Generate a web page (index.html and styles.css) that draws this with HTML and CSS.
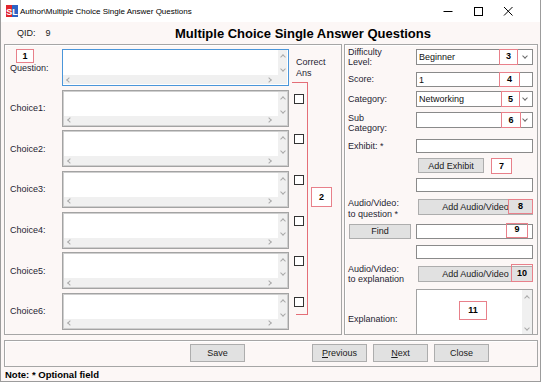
FILE: index.html
```html
<!DOCTYPE html>
<html>
<head>
<meta charset="utf-8">
<title>Multiple Choice Single Answer Questions</title>
<link rel="stylesheet" href="styles.css">
</head>
<body>
<div class="window">
  <div class="titlebar">
    <svg class="appicon" width="12" height="12" viewBox="0 0 12 12">
      <rect x="0" y="0" width="6" height="12" fill="#e1262d"/>
      <rect x="6" y="0" width="6" height="12" fill="#2c63c4"/>
      <text x="3.2" y="9.5" font-size="9" font-family="Liberation Sans" font-weight="bold" fill="#fff" text-anchor="middle">S</text>
      <text x="9" y="9.5" font-size="9" font-family="Liberation Sans" font-weight="bold" fill="#fff" text-anchor="middle">L</text>
    </svg>
    <span class="wtitle">Author\Multiple Choice Single Answer Questions</span>
    <div class="wctrls">
      <span class="wc"><svg width="10" height="10" viewBox="0 0 10 10"><line x1="0.5" y1="5.5" x2="9.5" y2="5.5" stroke="#000" stroke-width="1"/></svg></span>
      <span class="wc"><svg width="10" height="10" viewBox="0 0 10 10"><rect x="1.5" y="1.5" width="8" height="8" fill="none" stroke="#000" stroke-width="1"/></svg></span>
      <span class="wc"><svg width="10" height="10" viewBox="0 0 10 10"><path d="M1 1 L9.5 9.5 M9.5 1 L1 9.5" stroke="#000" stroke-width="1"/></svg></span>
    </div>
  </div>

  <div class="header">
    <div class="qidbox"><span>QID:</span><span class="qidv">9</span></div>
    <div class="heading">Multiple Choice Single Answer Questions</div>
  </div>

  <div class="main">
    <div class="lgroup">
      <div class="llbl">Question:</div>
      <div class="ta focus"><div class="tab"></div><div class="vs"><i class="cv up"></i><i class="cv dn"></i></div><div class="hs"><i class="cv lf"></i><i class="cv rt"></i></div><div class="corner"></div></div>
      <div class="chkcell"><div class="corr">Correct<br>Ans</div></div>

      <div class="llbl">Choice1:</div>
      <div class="ta"><div class="tab"></div><div class="vs"><i class="cv up"></i><i class="cv dn"></i></div><div class="hs"><i class="cv lf"></i><i class="cv rt"></i></div><div class="corner"></div></div>
      <div class="chkcell"><span class="chk"></span></div>

      <div class="llbl">Choice2:</div>
      <div class="ta"><div class="tab"></div><div class="vs"><i class="cv up"></i><i class="cv dn"></i></div><div class="hs"><i class="cv lf"></i><i class="cv rt"></i></div><div class="corner"></div></div>
      <div class="chkcell"><span class="chk"></span></div>

      <div class="llbl">Choice3:</div>
      <div class="ta"><div class="tab"></div><div class="vs"><i class="cv up"></i><i class="cv dn"></i></div><div class="hs"><i class="cv lf"></i><i class="cv rt"></i></div><div class="corner"></div></div>
      <div class="chkcell"><span class="chk"></span></div>

      <div class="llbl">Choice4:</div>
      <div class="ta"><div class="tab"></div><div class="vs"><i class="cv up"></i><i class="cv dn"></i></div><div class="hs"><i class="cv lf"></i><i class="cv rt"></i></div><div class="corner"></div></div>
      <div class="chkcell"><span class="chk"></span></div>

      <div class="llbl">Choice5:</div>
      <div class="ta"><div class="tab"></div><div class="vs"><i class="cv up"></i><i class="cv dn"></i></div><div class="hs"><i class="cv lf"></i><i class="cv rt"></i></div><div class="corner"></div></div>
      <div class="chkcell"><span class="chk"></span></div>

      <div class="llbl">Choice6:</div>
      <div class="ta"><div class="tab"></div><div class="vs"><i class="cv up"></i><i class="cv dn"></i></div><div class="hs"><i class="cv lf"></i><i class="cv rt"></i></div><div class="corner"></div></div>
      <div class="chkcell"><span class="chk"></span></div>
    </div>

    <div class="rgroup">
      <div class="rrow r1">
        <div class="rl">Difficulty<br>Level:</div>
        <div class="sel"><span>Beginner</span><i class="cv dn dark"></i></div>
      </div>
      <div class="rrow r2">
        <div class="rl">Score:</div>
        <div class="inp"><span>1</span></div>
      </div>
      <div class="rrow r3">
        <div class="rl">Category:</div>
        <div class="sel"><span>Networking</span><i class="cv dn dark"></i></div>
      </div>
      <div class="rrow r4">
        <div class="rl shift3">Sub<br>Category:</div>
        <div class="sel"><span></span><i class="cv dn dark"></i></div>
      </div>
      <div class="rrow r5">
        <div class="rl">Exhibit: *</div>
        <div class="inp"></div>
      </div>
      <div class="rrow r6">
        <div class="rl"></div>
        <div class="btn addex">Add Exhibit</div>
      </div>
      <div class="rrow r7">
        <div class="rl"></div>
        <div class="inp"></div>
      </div>
      <div class="rrow r8">
        <div class="rl shift2">Audio/Video:<br>to question *</div>
        <div class="btn addav">Add Audio/Video</div>
      </div>
      <div class="rrow r9">
        <div class="rl"><div class="btn find">Find</div></div>
        <div class="inp"></div>
      </div>
      <div class="rrow r10">
        <div class="rl"></div>
        <div class="inp"></div>
      </div>
      <div class="rrow r11">
        <div class="rl">Audio/Video:<br>to explanation</div>
        <div class="btn addav">Add Audio/Video</div>
      </div>
      <div class="rrow r12">
        <div class="rl expl">Explanation:</div>
        <div class="ta2"><div class="tab"></div><div class="vs2"><i class="cv up"></i><i class="cv dn"></i></div></div>
      </div>
    </div>
  </div>

  <div class="footer">
    <div class="btn fbtn">Save</div>
    <div class="btn fbtn prev"><span><u>P</u>revious</span></div>
    <div class="btn fbtn next"><span><u>N</u>ext</span></div>
    <div class="btn fbtn next">Close</div>
  </div>
  <div class="note">Note: * Optional field</div>

  <div class="bracket"></div>
  <div class="ann a1">1</div>
  <div class="ann a2">2</div>
  <div class="ann a3">3</div>
  <div class="ann a4">4</div>
  <div class="ann a5">5</div>
  <div class="ann a6">6</div>
  <div class="ann a7">7</div>
  <div class="ann a8">8</div>
  <div class="ann a9">9</div>
  <div class="ann a10">10</div>
  <div class="ann a11">11</div>
</div>
</body>
</html>
```

FILE: styles.css
```css
* { box-sizing: border-box; }
html, body { margin: 0; padding: 0; background: #fff; }
body {
  font-family: "Liberation Sans", Arial, sans-serif;
  font-size: 9px;
  color: #1f1d33;
}

.window {
  position: relative;
  width: 541px;
  height: 382px;
  background: #fcf7f6;
  border: 1px solid #9c9c9c;
  border-top: 0;
  display: flex;
  flex-direction: column;
  overflow: hidden;
}

/* title bar */
.titlebar {
  height: 22px;
  flex: none;
  background: #fff;
  display: flex;
  align-items: center;
}
.appicon { margin-left: 5px; display: block; }
.wtitle { margin-left: 2px; font-size: 8px; color: #000; }
.wctrls { margin-left: auto; margin-right: 17px; display: flex; }
.wc {
  width: 30px;
  height: 22px;
  display: flex;
  align-items: center;
  justify-content: center;
}
.wc svg { display: block; }

/* header */
.header {
  height: 22px;
  flex: none;
  display: flex;
  align-items: center;
  padding-left: 16px;
}
.qidbox { width: 158px; font-size: 9px; color: #222; }
.qidv { margin-left: 10px; }
.heading { font-size: 13px; font-weight: bold; color: #000; }

/* main */
.main {
  height: 291px;
  flex: none;
  display: flex;
  gap: 2px;
  margin-left: 3px;
}
.lgroup, .rgroup {
  border: 1px solid #a6a6a6;
  box-shadow: inset 1px 1px 0 #fff;
}
.lgroup {
  width: 338px;
  padding-top: 4px;
  display: grid;
  grid-template-columns: 57px 227px 1fr;
  grid-auto-rows: 37px;
  row-gap: 3.67px;
  align-content: start;
}
.llbl { padding-left: 5px; align-self: center; }

.ta {
  border: 1px solid #a3a3a3;
  box-shadow: inset 0 0 0 1px #cfcfcf;
  background: #fff;
  display: grid;
  grid-template-columns: 1fr 9px;
  grid-template-rows: 1fr 9px;
  padding: 1px;
}
.ta.focus { border-color: #4a96da; box-shadow: none; padding: 0 1px 1px 0; }
.tab { background: #fff; }
.vs, .hs, .corner { background: #f0f0f0; }
.vs {
  display: flex;
  flex-direction: column;
  align-items: center;
  padding-top: 4px;
  gap: 8px;
}
.hs {
  display: flex;
  justify-content: space-between;
  align-items: center;
  padding: 0 7px 0 4px;
}

.cv {
  display: block;
  width: 4px;
  height: 4px;
  border-left: 1px solid #a9a9a9;
  border-top: 1px solid #a9a9a9;
}
.cv.up { transform: rotate(45deg); margin-top: 1px; }
.cv.dn { transform: rotate(225deg); }
.cv.lf { transform: rotate(-45deg); }
.cv.rt { transform: rotate(135deg); }
.cv.dark { border-color: #6a6a6a; width: 4px; height: 4px; margin-top: -2px; }

.chkcell { padding-left: 5px; }
.chk {
  display: block;
  width: 10px;
  height: 10px;
  margin-top: 4px;
  border: 1px solid #333;
  background: #fff;
}
.corr { padding-left: 2px; margin-top: 8px; line-height: 11px; }

/* right panel */
.rgroup {
  width: 194px;
  padding: 0 4px 0 3px;
  display: flex;
  flex-direction: column;
  overflow: hidden;
}
.rrow { display: flex; align-items: center; flex: none; }
.rl { width: 68px; flex: none; line-height: 10.5px; }
.shift3 { margin-top: 6px; }
.shift2 { margin-top: 3px; }

.r1 { margin-top: 4px; height: 16px; }
.r2 { margin-top: 7px; height: 15px; }
.r3 { margin-top: 4px; height: 16px; }
.r4 { margin-top: 5px; height: 16px; }
.r5 { margin-top: 11px; height: 14px; }
.r6 { margin-top: 5px; height: 15px; }
.r7 { margin-top: 5px; height: 14px; }
.r8 { margin-top: 7px; height: 16px; }
.r9 { margin-top: 9px; height: 15px; }
.r10 { margin-top: 6px; height: 14px; }
.r11 { margin-top: 7px; height: 16px; }
.r12 { margin-top: 7px; height: 48px; align-items: flex-start; }

.sel, .inp {
  width: 117px;
  height: 100%;
  background: #fff;
  border: 1px solid #8a8a8a;
  display: flex;
  align-items: center;
  padding: 0 5px 0 2px;
  color: #111;
}
.sel { justify-content: space-between; }

.btn {
  background: #e1e1e1;
  border: 1px solid #adadad;
  display: flex;
  align-items: center;
  justify-content: center;
  color: #1a1a1a;
  height: 100%;
}
.addex { width: 66px; margin-left: 2px; }
.addav { width: 115px; margin-left: 2px; }
.find { width: 62px; margin-left: 1px; height: 15px; }
.expl { margin-top: 25px; }

.ta2 {
  width: 117px;
  height: 48px;
  border: 1px solid #a3a3a3;
  background: #fff;
  display: grid;
  grid-template-columns: 1fr 10px;
}
.vs2 {
  background: #f0f0f0;
  display: flex;
  flex-direction: column;
  align-items: center;
  justify-content: space-between;
  padding: 5px 0 6px;
}

/* footer */
.footer {
  margin: 5px 0 0 3px;
  width: 534px;
  height: 27px;
  flex: none;
  border: 1px solid #a6a6a6;
  box-shadow: inset 1px 1px 0 #fff;
  display: flex;
  align-items: flex-start;
  padding: 3px 0 0 185px;
}
.fbtn { width: 55px; height: 18px; }
.prev { margin-left: 67px; }
.next { margin-left: 6px; }

.note {
  height: 14px;
  flex: none;
  padding-left: 4px;
  display: flex;
  align-items: center;
  font-weight: bold;
  font-size: 9.5px;
  color: #000;
}

/* annotations */
.bracket {
  position: absolute;
  left: 291px;
  top: 82px;
  width: 16px;
  height: 233px;
  border-top: 1px solid #e46e77;
  border-right: 1px solid #e46e77;
}
.bracket::after {
  content: "";
  position: absolute;
  left: 4px;
  right: 0;
  bottom: 0;
  border-bottom: 1px solid #e46e77;
}
.ann {
  position: absolute;
  border: 1px solid #e8808a;
  font-weight: bold;
  font-size: 9px;
  color: #000;
  display: flex;
  justify-content: center;
  align-items: center;
  line-height: 1;
}
.a1 { left: 15px; top: 49px; width: 18px; height: 14px; background: #fff; align-items: flex-start; padding-top: 2px; }
.a2 { left: 310px; top: 187px; width: 21px; height: 20px; background: #fff; }
.a3 { left: 498px; top: 49px; width: 19px; height: 16px; align-items: flex-start; padding-top: 2px; }
.a4 { left: 498px; top: 72px; width: 21px; height: 15px; }
.a5 { left: 500px; top: 91px; width: 19px; height: 16px; }
.a6 { left: 500px; top: 112px; width: 20px; height: 16px; }
.a7 { left: 490px; top: 158px; width: 21px; height: 16px; background: #fff; }
.a8 { left: 507px; top: 199px; width: 25px; height: 15px; }
.a9 { left: 505px; top: 223px; width: 22px; height: 15px; align-items: flex-start; padding-top: 1px; }
.a10 { left: 510px; top: 264px; width: 22px; height: 18px; }
.a11 { left: 458px; top: 301px; width: 28px; height: 19px; background: #fff; }
```
